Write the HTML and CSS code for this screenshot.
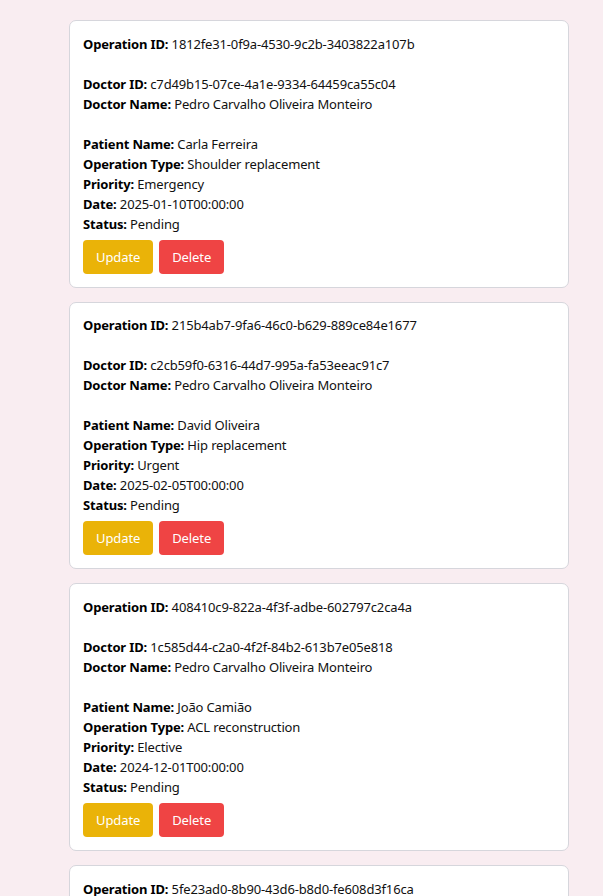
FILE: index.html
```html
<!DOCTYPE html>
<html>
<head>
<meta charset="utf-8">
<link rel="stylesheet" href="styles.css">
</head>
<body>
<div class="list">
  <div class="card">
    <p class="row"><b>Operation ID:</b> 1812fe31-0f9a-4530-9c2b-3403822a107b</p>
    <p class="row gap"><b>Doctor ID:</b> c7d49b15-07ce-4a1e-9334-64459ca55c04</p>
    <p class="row"><b>Doctor Name:</b> Pedro Carvalho Oliveira Monteiro</p>
    <p class="row gap"><b>Patient Name:</b> Carla Ferreira</p>
    <p class="row"><b>Operation Type:</b> Shoulder replacement</p>
    <p class="row"><b>Priority:</b> Emergency</p>
    <p class="row"><b>Date:</b> 2025-01-10T00:00:00</p>
    <p class="row"><b>Status:</b> Pending</p>
    <div class="actions"><button class="btn update">Update</button><button class="btn delete">Delete</button></div>
  </div>
  <div class="card">
    <p class="row"><b>Operation ID:</b> 215b4ab7-9fa6-46c0-b629-889ce84e1677</p>
    <p class="row gap"><b>Doctor ID:</b> c2cb59f0-6316-44d7-995a-fa53eeac91c7</p>
    <p class="row"><b>Doctor Name:</b> Pedro Carvalho Oliveira Monteiro</p>
    <p class="row gap"><b>Patient Name:</b> David Oliveira</p>
    <p class="row"><b>Operation Type:</b> Hip replacement</p>
    <p class="row"><b>Priority:</b> Urgent</p>
    <p class="row"><b>Date:</b> 2025-02-05T00:00:00</p>
    <p class="row"><b>Status:</b> Pending</p>
    <div class="actions"><button class="btn update">Update</button><button class="btn delete">Delete</button></div>
  </div>
  <div class="card">
    <p class="row"><b>Operation ID:</b> 408410c9-822a-4f3f-adbe-602797c2ca4a</p>
    <p class="row gap"><b>Doctor ID:</b> 1c585d44-c2a0-4f2f-84b2-613b7e05e818</p>
    <p class="row"><b>Doctor Name:</b> Pedro Carvalho Oliveira Monteiro</p>
    <p class="row gap"><b>Patient Name:</b> João Camião</p>
    <p class="row"><b>Operation Type:</b> ACL reconstruction</p>
    <p class="row"><b>Priority:</b> Elective</p>
    <p class="row"><b>Date:</b> 2024-12-01T00:00:00</p>
    <p class="row"><b>Status:</b> Pending</p>
    <div class="actions"><button class="btn update">Update</button><button class="btn delete">Delete</button></div>
  </div>
  <div class="card">
    <p class="row"><b>Operation ID:</b> 5fe23ad0-8b90-43d6-b8d0-fe608d3f16ca</p>
  </div>
</div>
</body>
</html>
```
FILE: styles.css
```css
html, body {
  margin: 0;
  padding: 0;
  background: #f9edf1;
}
body {
  font-family: "Noto Sans", "Open Sans", sans-serif;
  font-size: 13px;
  letter-spacing: -0.15px;
  color: #111;
  overflow: hidden;
  height: 896px;
}
.list {
  display: flex;
  flex-direction: column;
  gap: 14px;
  padding: 20px 0 0 69px;
  width: 500px;
}
.card {
  background: #fff;
  border: 1px solid #d6d6dc;
  border-radius: 7px;
  padding: 12.8px 13px;
}
.row {
  margin: 0;
  line-height: 20px;
}
.row b {
  font-weight: 700;
  color: #000;
}
.gap {
  margin-top: 20px;
}
.actions {
  display: flex;
  gap: 6px;
  margin-top: 6px;
}
.btn {
  font-family: inherit;
  font-size: 13px;
  letter-spacing: -0.1px;
  line-height: 20px;
  color: #fff;
  border: none;
  border-radius: 4px;
  padding: 7px 13px;
  cursor: pointer;
}
.update {
  background: #eab308;
}
.delete {
  background: #ef4444;
}
```
